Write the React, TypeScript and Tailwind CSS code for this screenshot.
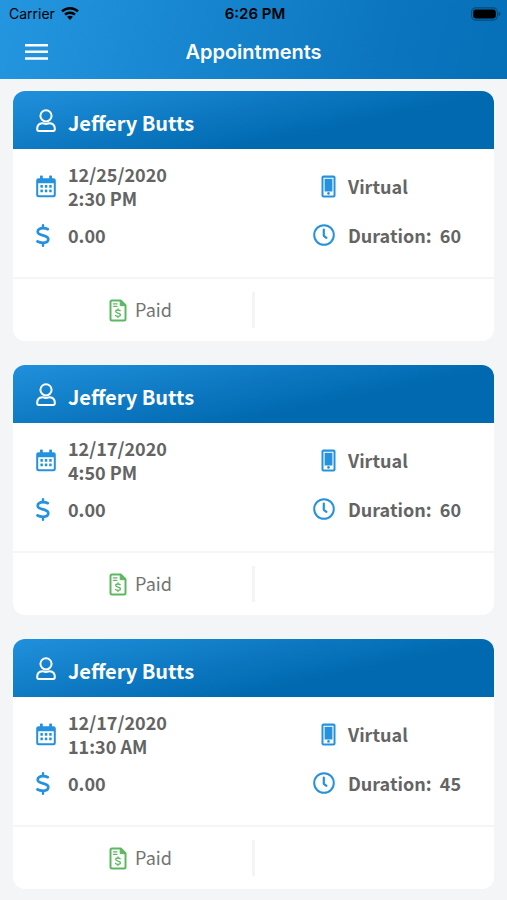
type Appointment = {
  id: number
  name: string
  date: string
  time: string
  price: string
  kind: string
  duration: number
}

const appointments: Appointment[] = [
  { id: 1, name: 'Jeffery Butts', date: '12/25/2020', time: '2:30 PM', price: '0.00', kind: 'Virtual', duration: 60 },
  { id: 2, name: 'Jeffery Butts', date: '12/17/2020', time: '4:50 PM', price: '0.00', kind: 'Virtual', duration: 60 },
  { id: 3, name: 'Jeffery Butts', date: '12/17/2020', time: '11:30 AM', price: '0.00', kind: 'Virtual', duration: 45 },
]

function WifiIcon() {
  return (
    <svg viewBox="0 0 18 14" className="w-[18px] h-[14px]" fill="currentColor">
      <path d="M9 0C5.600 0 2.500 1.300 0.200 3.500L1.900 5.300A10.200 10.200 0 0 1 16.100 5.300L17.800 3.500A12.600 12.600 0 0 0 9 0Z" />
      <path d="M9 4.500C6.800 4.500 4.800 5.300 3.200 6.700L4.900 8.500A6 6 0 0 1 13.100 8.500L14.800 6.700A8.600 8.600 0 0 0 9 4.500Z" />
      <path d="M9 8.700C7.900 8.700 6.900 9.100 6.100 9.800L9 13L11.900 9.800A4.400 4.400 0 0 0 9 8.700Z" />
    </svg>
  )
}

function BatteryIcon() {
  return (
    <svg viewBox="0 0 30 14" className="w-[30px] h-[14px]">
      <rect x="0.600" y="0.900" width="25.800" height="12.200" rx="4" fill="none" stroke="#000" strokeOpacity="0.350" strokeWidth="1.200" />
      <rect x="2.200" y="2.500" width="22.600" height="9" rx="2.400" fill="#000" />
      <path d="M27.600 4.800c1.200.4 1.800 1.200 1.800 2.200s-.6 1.800-1.800 2.200z" fill="#000" fillOpacity="0.400" />
    </svg>
  )
}

function UserIcon() {
  return (
    <svg viewBox="0 0 20 23" className="w-5 h-[23px] shrink-0" fill="none" stroke="currentColor" strokeWidth="2">
      <circle cx="10" cy="6.800" r="5.600" />
      <path d="M6.200 14.200C3.200 14.500 1.200 16.700 1.200 19.600V20.300C1.200 21.300 1.800 21.900 2.800 21.900H17.200C18.200 21.900 18.800 21.300 18.800 20.300V19.600C18.800 16.700 16.800 14.500 13.800 14.200C12.500 14.100 11.800 14.900 10 14.900C8.200 14.900 7.500 14.100 6.200 14.200Z" />
    </svg>
  )
}

function CalendarIcon() {
  return (
    <svg viewBox="0 0 20 23" className="w-5 h-[23px] shrink-0" fill="currentColor">
      <path d="M4 1.200Q4 .4 4.800.4H6Q6.800.4 6.800 1.200V3.200H13.200V1.200Q13.200.4 14 .4H15.200Q16 .4 16 1.200V3.200H17.500A2.300 2.300 0 0 1 19.800 5.500V20A2.300 2.300 0 0 1 17.500 22.300H2.500A2.300 2.300 0 0 1 .2 20V5.500A2.300 2.300 0 0 1 2.500 3.200H4ZM2.200 8.200V19.600Q2.200 20.300 2.900 20.300H17.100Q17.800 20.300 17.800 19.600V8.200Z" fillRule="evenodd" />
      {[10, 14.6].map(y => [4.4, 8.8, 13.2].map(x => <rect key={`${x}-${y}`} x={x} y={y} width="2.500" height="2.700" rx="0.500" />))}
    </svg>
  )
}

function DollarIcon() {
  return (
    <svg viewBox="0 0 14 23" className="w-[14px] h-[23px] shrink-0" fill="none" stroke="currentColor" strokeLinecap="round" strokeLinejoin="round">
      <path d="M7 1.200V4M7 19V21.800" strokeWidth="2.400" />
      <path d="M11.800 5.200C10.500 4.500 9 4.200 7 4.200C3.800 4.200 1.700 5.500 1.700 7.700C1.700 9.900 3.400 10.500 6.900 11.400C10.500 12.300 12.300 13 12.300 15.300C12.300 17.500 10.300 18.800 7 18.800C4.800 18.800 3 18.400 1.500 17.500" strokeWidth="2.700" />
    </svg>
  )
}

function PhoneIcon() {
  return (
    <svg viewBox="0 0 15 23" className="w-[15px] h-[23px]">
      <rect x="0.500" y="0.500" width="14" height="22" rx="2" fill="currentColor" />
      <path d="M2.500 2.800H12.500V20.500H2.500Z" fill="#fff" />
      <rect x="3.600" y="3.800" width="7.800" height="12.700" fill="currentColor" />
      <circle cx="7.500" cy="18.400" r="1.300" fill="currentColor" />
    </svg>
  )
}

function ClockIcon() {
  return (
    <svg viewBox="0 0 22 22" className="w-[22px] h-[22px]" fill="none" stroke="currentColor" strokeLinecap="round" strokeLinejoin="round">
      <circle cx="11" cy="11" r="9.800" strokeWidth="2" />
      <path d="M10.800 5.600V11.800L13.400 13.900" strokeWidth="2.200" />
    </svg>
  )
}

function InvoiceIcon() {
  return (
    <svg viewBox="0 0 18 23" className="w-[18px] h-[23px] text-[#5cb85f]" fill="none" stroke="currentColor" strokeLinecap="round" strokeLinejoin="round">
      <path d="M3 1.500H11.700L16.500 6.300V20Q16.500 21.500 15 21.500H3Q1.500 21.500 1.500 20V3Q1.500 1.500 3 1.500Z" strokeWidth="2" />
      <path d="M11.200 1.800V6.700H16.200Z" fill="currentColor" strokeWidth="1" />
      <path d="M4.500 4.900H8M4.500 7.300H8" strokeWidth="1.200" />
      <path d="M9 9.800V11M9 17.300V18.500M11.200 11.700C10.600 11.200 9.900 11 9 11C7.600 11 6.700 11.600 6.700 12.600C6.700 14.700 11.400 13.600 11.400 15.700C11.400 16.700 10.400 17.300 9 17.300C8 17.300 7.200 17.100 6.500 16.500" strokeWidth="1.300" />
    </svg>
  )
}

function AppointmentCard({ item }: { item: Appointment }) {
  return (
    <article className="overflow-hidden rounded-xl bg-white text-[#646464]">
      <header className="flex h-[58px] items-center gap-3 bg-[linear-gradient(168deg,#2190dc_0%,#0069b0_66%,#0069b0_100%)] px-[23px] text-white">
        <UserIcon />
        <h2 className="pt-1.5 text-xl leading-7 font-bold">{item.name}</h2>
      </header>

      {/* Details */}
      <div className="grid min-h-[130px] grid-cols-[1fr_158px] content-start gap-y-[13px] border-b-2 border-[#f4f5f6] px-[23px] pt-[13px] text-lg leading-6 font-bold">
        <div className="flex items-center gap-3">
          <span className="text-[#2492de]"><CalendarIcon /></span>
          <div>
            <div>{item.date}</div>
            <div>{item.time}</div>
          </div>
        </div>
        <div className="flex items-center gap-3">
          <span className="flex w-[23px] justify-end text-[#2492de]"><PhoneIcon /></span>
          <span>{item.kind}</span>
        </div>
        <div className="flex items-center gap-3">
          <span className="w-5 text-[#2492de]"><DollarIcon /></span>
          <span>{item.price}</span>
        </div>
        <div className="flex items-center gap-3">
          <span className="flex w-[23px] text-[#2492de]"><ClockIcon /></span>
          <span className="whitespace-pre">Duration:  {item.duration}</span>
        </div>
      </div>

      {/* Status */}
      <footer className="grid h-[62px] grid-cols-[1fr_3px_1fr] items-center">
        <div className="flex items-center justify-center gap-2 pl-4 text-lg leading-6 text-[#737373]">
          <InvoiceIcon />
          <span className="pb-0.5">Paid</span>
        </div>
        <div className="h-9 bg-[#f3f4f5]" />
      </footer>
    </article>
  )
}

export default function App() {
  return (
    <div className="min-h-screen bg-[#f3f5f7] font-['Noto_Sans_CJK_SC',sans-serif]">
      <div className="bg-[linear-gradient(105deg,#2496e0_0%,#0b76bf_75%,#0570b8_100%)] font-[Inter,sans-serif]">
        {/* Status bar */}
        <div className="grid h-[27px] grid-cols-3 items-center pr-1.5 pl-[9px] text-sm text-black">
          <div className="flex items-center gap-1.5">
            <span>Carrier</span>
            <WifiIcon />
          </div>
          <div className="text-center text-[15px] font-semibold">6:26 PM</div>
          <div className="flex justify-end"><BatteryIcon /></div>
        </div>

        <header className="grid h-[52px] grid-cols-[1fr_auto_1fr] items-center px-[25px] pb-0.5 text-white">
          <button type="button" aria-label="Menu" className="flex h-6 w-[23px] items-center">
            <svg viewBox="0 0 23 16" className="w-[23px] h-4" fill="currentColor">
              <path d="M0 0H23V2.500H0ZM0 6.600H23V9.100H0ZM0 13.200H23V15.700H0Z" />
            </svg>
          </button>
          <h1 className="text-xl leading-7 font-semibold">Appointments</h1>
        </header>
      </div>

      <main className="flex flex-col gap-6 px-[13px] py-3">
        {appointments.map(item => <AppointmentCard key={item.id} item={item} />)}
      </main>
    </div>
  )
}
